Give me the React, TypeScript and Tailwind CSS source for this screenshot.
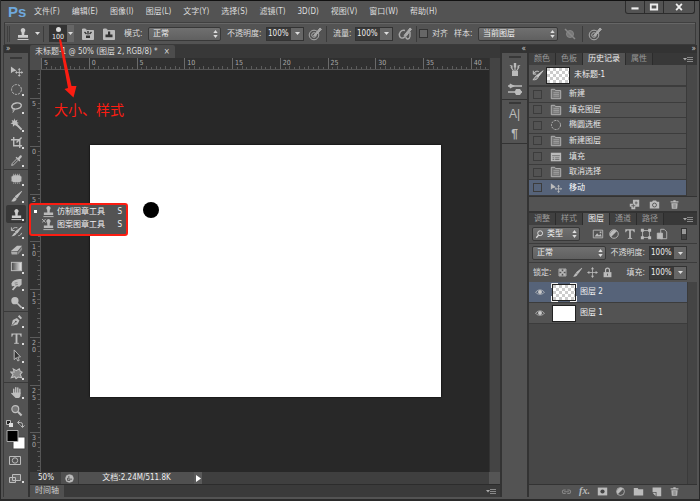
import React, { useLayoutEffect, useRef, useState } from "react";

type IconProps = { size?: number; className?: string; children: React.ReactNode };

const Svg = ({ size = 14, className = "", children }: IconProps) => (
  <svg
    width={size}
    height={size}
    viewBox="0 0 14 14"
    fill="none"
    stroke="currentColor"
    strokeWidth="1"
    className={`shrink-0 ${className}`}
    aria-hidden="true"
  >
    {children}
  </svg>
);

const moveIcon = (
  <>
    <path d="M1 1.500v7.500l2-1.800L7 6z" fill="currentColor" stroke="none" />
    <path d="M10 4.500v7M6.500 8h7" />
    <path d="M10 3.300l1.700 1.900H8.300zM10 12.700l1.700-1.900H8.300zM5.500 8l1.900-1.700v3.400zM14 8l-1.700-1.700v3.400z" fill="currentColor" stroke="none" />
  </>
);
const ellipseIcon = <circle cx="7" cy="7" r="5.300" strokeDasharray="2.600 1.100" />;
const stampIcon = (
  <>
    <path d="M7 1a2.400 2.400 0 0 1 1.500 4.200L8.200 8H12v2.800H2V8h3.800l-.3-2.800A2.400 2.400 0 0 1 7 1z" fill="currentColor" stroke="none" />
    <path d="M1.500 12.500h11" />
  </>
);
const brushIcon = (
  <>
    <path d="M12.500 1.500L7.500 8.500 5.500 7z" fill="currentColor" />
    <path d="M5.300 7.500l2 1.800C6.500 11.800 4 12.800 1 12.200c1.800-.5 2-3.700 4.300-4.700z" fill="currentColor" stroke="none" />
  </>
);
const docIcon = (
  <>
    <path d="M1.500 12.500v-11h4l1 1.500h6v9.500z" fill="#777" />
    <path d="M4 5.500h6.500M4 7.500h6.500M4 9.500h6.500" stroke="#a5a5a5" />
  </>
);
const fillIcon = (
  <>
    <path d="M1 2h12v10H1z" fill="currentColor" stroke="none" />
    <path d="M2.500 5.500h9M3 8h2M6 8h5M3 10h2M6 10h5" stroke="#666" />
  </>
);
const trashIcon = (
  <>
    <path d="M2 3h10v1.500H2zM5.500 1.500h3V3h-3zM3 5.500h8l-.6 7H3.600z" fill="currentColor" stroke="none" />
    <path d="M5.500 6.500v5M7 6.500v5M8.500 6.500v5" stroke="#666" strokeWidth=".6" />
  </>
);
const typeIcon = (
  <>
    <path d="M1.500 1.500h11V5h-1c-.2-1.500-.8-2.200-2.200-2.200H4.700C3.300 2.800 2.700 3.500 2.500 5h-1z" fill="currentColor" stroke="none" />
    <path d="M7 2v10" strokeWidth="2" />
    <path d="M4.500 12.200h5" />
  </>
);
const targetPen = (
  <>
    <circle cx="6" cy="8" r="4.800" />
    <circle cx="6" cy="8" r="2.300" />
    <path d="M5.500 8.800L12 1l1.500 1.300L7 9z" fill="currentColor" />
  </>
);
const circleHalf = (
  <>
    <circle cx="7" cy="7" r="5" />
    <path d="M3.500 10.500A5 5 0 0 1 10.500 3.500z" fill="currentColor" stroke="none" />
  </>
);

const toolGroups = [
  [
    { name: "移动", icon: moveIcon },
    { name: "椭圆选框", icon: ellipseIcon },
    {
      name: "套索",
      icon: (
        <>
          <path d="M3.500 8.500C.5 6.500 2 3 6.500 2.200 10.500 1.500 13 3.300 12 5.600 11 8 6.500 9.500 3.800 8.300" strokeWidth="1.500" />
          <path d="M3.800 8c1.500.5 1.500 2.200.2 2.600-1 .2-1.500-1.500 0-1.700M4 10.500L3 12.500" />
        </>
      ),
    },
    {
      name: "魔棒",
      icon: (
        <>
          <path d="M6 6l6.500 6.500" strokeWidth="2.200" />
          <path d="M4.800.3l.8 2.700 2.500-1-.8 2.400 2.300 1.100-2.600 1 .5 2.500-2.200-1.400L3.100 9.300l.1-2.700L.5 6l2.300-1.300-1.100-2.600 2.400.9z" fill="currentColor" stroke="none" />
        </>
      ),
    },
    { name: "裁剪", icon: <path d="M4 1v9.500h9M1 4h9.500v9M7 7l5.500-5.500" strokeWidth="1.500" /> },
    {
      name: "吸管",
      icon: (
        <>
          <path d="M7 5.500L2.500 10l-.7 2.300L4 11.500 8.500 7" />
          <path d="M6 4l1-1 1.500 1.300 2-2.300c1.500-1.400 3 .2 2 1.600L10.300 6l1 1-1.200 1.200z" fill="currentColor" stroke="none" />
        </>
      ),
    },
  ],
  [
    {
      name: "修补",
      icon: (
        <>
          <rect x="2" y="3.500" width="10" height="7.500" rx="2.500" fill="currentColor" stroke="none" />
          <path d="M4 2v10.500M6 2v10.500M8 2v10.500M10 2v10.500M1 5.500h12M1 7.500h12M1 9.500h12" strokeDasharray="1 .6" />
        </>
      ),
    },
    { name: "画笔", icon: brushIcon },
    { name: "仿制图章", icon: stampIcon },
    {
      name: "历史记录画笔",
      icon: (
        <>
          <path d="M12.500 2L7.500 9 5.500 7.500z" fill="currentColor" />
          <path d="M5.500 8L7 9.500c-1 2-3 2.700-5.500 2.500 1.500-.8 2-3 4-4z" fill="currentColor" stroke="none" />
          <path d="M2 5.500C3 3 5.500 2.300 8 3M1.500 2.500v3.500H5M9 11.500c1.800 0 3-1 3.500-3" />
        </>
      ),
    },
    {
      name: "橡皮擦",
      icon: (
        <>
          <path d="M1 8.500L7.500 3H13L8 9z" fill="currentColor" stroke="none" />
          <path d="M1 9.200l7 .4v2.900H1.800z" fill="#aaa" stroke="none" />
          <path d="M8.600 9.600L13 4v3.200l-4.400 5.300z" fill="#888" stroke="none" />
        </>
      ),
    },
    {
      name: "渐变",
      icon: (
        <>
          <defs>
            <linearGradient id="ramp">
              <stop offset="0" stopColor="#444" />
              <stop offset="1" stopColor="#eee" />
            </linearGradient>
          </defs>
          <rect x="1.500" y="2.500" width="11" height="9" fill="url(#ramp)" />
        </>
      ),
    },
    {
      name: "涂抹",
      icon: (
        <>
          <path d="M3 3.500C5 1.500 9 1 12.500 1v6L10 9.500 7.500 9l-4 4.500L2 12.500 5 8.500l-3 .5-.5-3z" fill="currentColor" stroke="none" />
          <path d="M5 5.500l3-.5M5.500 7.500l3-.7" stroke="#666" strokeWidth=".7" />
        </>
      ),
    },
    {
      name: "减淡",
      icon: (
        <>
          <circle cx="5.300" cy="5" r="3.900" fill="currentColor" stroke="none" />
          <path d="M7.800 7.800l4.700 4.700" strokeWidth="1.700" />
        </>
      ),
    },
  ],
  [
    {
      name: "钢笔",
      icon: (
        <>
          <path d="M1.500 13L3 6.500l4.500-2.300 2.700 2.700L8 11.300z" fill="currentColor" stroke="none" />
          <path d="M8.500 2.800L10 1.200l3 3-1.600 1.500z" fill="currentColor" stroke="none" />
          <path d="M2 12.500l4-4" stroke="#555" />
          <circle cx="6.300" cy="8.200" r="1" fill="#555" stroke="none" />
        </>
      ),
    },
    { name: "文字", icon: typeIcon },
    { name: "路径选择", icon: <path d="M4.500 1v10.500l2.300-2.200 1.600 3.600 1.500-.7-1.600-3.500 3-.2z" fill="#333" /> },
    {
      name: "自定形状",
      icon: <path d="M3.500 2l3.300 2L10 2l1 2.500 2 1-2 2.500 1.500 3.500-3.700-.7-2.300 1.700-1.300-2-3.700 1L3.200 8 1 5.500l3.500-.2z" fill="#888" strokeWidth="1.200" />,
    },
  ],
  [
    {
      name: "抓手",
      icon: (
        <>
          <path d="M4 8.500V3.500M6.200 7V1.700M8.400 7V2M10.600 8V3.500" strokeWidth="1.500" strokeLinecap="round" />
          <path d="M3.300 7h8v3.200c0 1-1.300 2.800-2 2.800H6L1.200 8.200c0-1.200 1.300-1.200 2.100-.3z" fill="currentColor" stroke="none" />
        </>
      ),
    },
    {
      name: "缩放",
      icon: (
        <>
          <circle cx="5.700" cy="5.500" r="3.700" fill="#777" strokeWidth="1.300" />
          <path d="M8.500 8.300l4 4" strokeWidth="2.200" />
        </>
      ),
    },
  ],
];

const menus = [
  "文件(F)", "编辑(E)", "图像(I)", "图层(L)", "文字(Y)", "选择(S)",
  "滤镜(T)", "3D(D)", "视图(V)", "窗口(W)", "帮助(H)",
];

const historyItems = [
  { label: "新建", icon: docIcon },
  { label: "填充图层", icon: docIcon },
  { label: "椭圆选框", icon: ellipseIcon },
  { label: "新建图层", icon: docIcon },
  { label: "填充", icon: fillIcon },
  { label: "取消选择", icon: docIcon },
  { label: "移动", icon: moveIcon },
];

const UpDown = () => (
  <svg width="5" height="8" viewBox="0 0 5 8" className="pointer-events-none absolute right-[3px] top-[3px]" fill="#ddd">
    <path d="M2.500 0L4.700 3H.3zM2.500 8L4.700 5H.3z" />
  </svg>
);

const Caret = () => (
  <svg width="5" height="3" viewBox="0 0 5 3" className="shrink-0" fill="#ddd">
    <path d="M0 0h5L2.500 3z" />
  </svg>
);

const Select = ({ id, value, className }: { id: string; value: string; className: string }) => (
  <div className={`relative h-[14px] ${className}`}>
    <select
      id={id}
      aria-label={value}
      className="h-full w-full appearance-none rounded-[2px] border border-[#383838] bg-gradient-to-b from-[#707070] to-[#606060] pl-1 leading-3 text-[#eee]"
    >
      <option>{value}</option>
    </select>
    <UpDown />
  </div>
);

const Percent = ({ id }: { id: string }) => (
  <div className="flex h-[14px] w-[38px] shrink-0 border border-[#333]">
    <input id={id} defaultValue="100%" className="w-6 bg-[#3a3a3a] pl-px text-[#eee] outline-none" />
    <button aria-label="展开" className="flex flex-1 items-center justify-center bg-[#666]">
      <Caret />
    </button>
  </div>
);

const Divider = () => <div className="h-4 w-px shrink-0 bg-[#3c3c3c]" />;

const Grip = () => <div className="mx-auto h-[2px] w-3 bg-[#383838]" />;

const Checker = ({ id }: { id: string }) => (
  <svg viewBox="0 0 22 15" className="block h-[17px] w-6 shrink-0 border border-[#222]">
    <defs>
      <pattern id={id} width="6" height="6" patternUnits="userSpaceOnUse">
        <path d="M0 0h6v6H0z" fill="#fff" />
        <path d="M0 0h3v3H0zM3 3h3v3H3z" fill="#ccc" />
      </pattern>
    </defs>
    <rect width="22" height="15" fill={`url(#${id})`} />
  </svg>
);

const PanelMenu = () => (
  <button aria-label="面板菜单" className="ml-auto mr-1 text-[#aaa]">
    <svg width="10" height="7" viewBox="0 0 10 7" fill="none" stroke="currentColor">
      <path d="M0 2h4L2 4.500z" fill="currentColor" stroke="none" />
      <path d="M4 1.500h6M4 3.500h6M4 5.500h6" stroke="#888" />
    </svg>
  </button>
);

const PanelTabs = ({ tabs, active }: { tabs: string[]; active: string }) => (
  <div className="flex h-3 shrink-0 bg-[#383838]">
    {tabs.map((tab) => (
      <button
        key={tab}
        className={
          tab === active
            ? "border-r border-[#2c2c2c] bg-[#535353] px-[5px] leading-3 text-[#eee]"
            : "border-r border-[#2c2c2c] bg-[#404040] px-[5px] leading-3 text-[#999]"
        }
      >
        {tab}
      </button>
    ))}
    <PanelMenu />
  </div>
);

// pixels per 5 ruler units at 50% zoom
const STEP = 47.75;

const useSize = () => {
  const ref = useRef<HTMLDivElement>(null);
  const [size, setSize] = useState({ width: 447, height: 402 });
  useLayoutEffect(() => {
    const measure = () => {
      const box = ref.current?.getBoundingClientRect();
      if (box && box.width && box.height) setSize({ width: box.width, height: box.height });
    };
    measure();
    window.addEventListener("resize", measure);
    return () => window.removeEventListener("resize", measure);
  }, []);
  return { ref, ...size };
};

const TopRuler = () => {
  const { ref, width } = useSize();
  return (
    <div ref={ref} className="h-3 min-w-0 flex-1 border-b border-[#555] bg-[#303030]">
      <svg className="h-full w-full" fontSize="7" fill="#aaa">
        {Array.from({ length: Math.ceil((width * 10) / STEP) }, (_, i) => (
          <path
            key={i}
            d={`M${Math.round((i * STEP) / 10) + 0.5} ${i % 10 === 0 ? 0 : i % 2 ? 9 : 8}V12`}
            stroke={i % 10 === 0 ? "#6a6a6a" : "#5c5c5c"}
          />
        ))}
        {Array.from({ length: Math.ceil(Math.max(0, width - 12) / STEP) }, (_, i) => (
          <text key={i} x={i * STEP + 3} y="7">
            {Math.abs(i * 5 - 5)}
          </text>
        ))}
      </svg>
    </div>
  );
};

const SideRuler = () => {
  const { ref, height } = useSize();
  return (
    <div ref={ref} className="w-[11px] shrink-0 border-r border-[#555] bg-[#303030]">
      <svg className="h-full w-full" fontSize="7" fill="#aaa">
        {Array.from({ length: Math.ceil((height * 10) / STEP) }, (_, i) => {
          const y = Math.round(28 + ((i - 5) * STEP) / 10) + 0.5;
          return <path key={i} d={`M${(i - 5) % 10 === 0 ? 0 : i % 2 ? 7 : 8} ${y}H11`} stroke="#5c5c5c" />;
        })}
        {Array.from({ length: Math.ceil(Math.max(0, height - 44) / STEP) }, (_, i) =>
          String(Math.abs(i * 5 - 5))
            .split("")
            .map((digit, n) => (
              <text key={`${i}-${n}`} x="2" y={28 + i * STEP + 8 + n * 7}>
                {digit}
              </text>
            ))
        )}
      </svg>
    </div>
  );
};

const MenuBar = () => (
  <header className="flex h-[22px] shrink-0 items-center border-t border-[#111] pl-[7px]">
    <span className="w-[26px] font-['Liberation_Sans',sans-serif] text-[15px] font-bold leading-5 text-[#6fa8dc]">Ps</span>
    <nav className="flex gap-3">
      {menus.map((menu) => (
        <button key={menu} className="whitespace-nowrap">
          {menu}
        </button>
      ))}
    </nav>
    <div className="mb-auto ml-auto mr-1 flex h-[13px] rounded-b-[3px] border border-t-0 border-[#2c2c2c] text-[#eee]">
      <button aria-label="最小化" className="flex w-[19px] items-center justify-center border-r border-[#2c2c2c]">
        <Svg size={10}><path d="M2 9h10" strokeWidth="3" /></Svg>
      </button>
      <button aria-label="最大化" className="flex w-[19px] items-center justify-center border-r border-[#2c2c2c]">
        <Svg size={10}><path d="M2.500 3.500h9v7h-9z" strokeWidth="2.500" /></Svg>
      </button>
      <button aria-label="关闭" className="flex w-[30px] items-center justify-center">
        <Svg size={10}><path d="M3 2.500l8 9M11 2.500l-8 9" strokeWidth="2.500" /></Svg>
      </button>
    </div>
  </header>
);

const OptionsBar = () => (
  <div className="mx-[3px] flex h-[23px] shrink-0 items-center border border-[#3a3a3a] border-t-[#404040] pl-[2px] shadow-[inset_0_1px_0_#666]">
    <div className="h-4 w-[3px] border-x border-[#404040]" />
    <button aria-label="仿制图章" className="ml-[6px] flex items-center gap-[5px] text-[#ccc]">
      <Svg>{stampIcon}</Svg>
      <Caret />
    </button>
    <div className="ml-[3px] mr-[5px]">
      <Divider />
    </div>
    <button className="flex h-[17px] w-[18px] flex-col items-center bg-[#333] text-[7px] leading-[8px] text-[#eee]">
      <span className="mt-[2px] h-[5px] w-[5px] shrink-0 rounded-full bg-[#ddd]" />
      <span className="mt-px">100</span>
    </button>
    <button aria-label="画笔预设" className="flex h-[17px] w-[7px] items-center justify-center bg-[#666]">
      <Caret />
    </button>
    <button aria-label="画笔面板" className="ml-[7px] text-[#bbb]">
      <Svg>
        <path d="M1.500 2h3l1 1.500h7v9h-11z" fill="currentColor" />
        <path d="M3.500 5l2 2M10.500 5l-2 2M7 4v3.500" stroke="#333" strokeWidth="1.400" />
        <path d="M5 8.500h4v2.500H5z" fill="#333" stroke="none" />
      </Svg>
    </button>
    <button aria-label="仿制源" className="ml-[7px] text-[#bbb]">
      <Svg>
        <path d="M1.500 2h3l1 1.500h7v9h-11z" fill="currentColor" />
        <path d="M6 4.500h2.200v3h2.300v2.700H3.500V7.500H6z" fill="#333" stroke="none" />
      </Svg>
    </button>
    <label htmlFor="mode" className="ml-[8px] w-6 shrink-0">模式:</label>
    <Select id="mode" value="正常" className="w-[73px]" />
    <label htmlFor="opacity" className="ml-[6px] w-[39px] shrink-0">不透明度:</label>
    <Percent id="opacity" />
    <button aria-label="不透明度压力" className="ml-1 mr-1 text-[#aaa]"><Svg>{targetPen}</Svg></button>
    <Divider />
    <label htmlFor="flow" className="ml-[6px] w-[22px] shrink-0">流量:</label>
    <Percent id="flow" />
    <button aria-label="喷枪" className="ml-[5px] mr-1 text-[#aaa]">
      <Svg>
        <path d="M6 8.500L12 1l1.500 1.200L8 9.500z" fill="currentColor" />
        <path d="M7 3.500C3 2.500.8 6 1.500 9c.6 2.500 3.500 3 5.500.5M8 10c0 3 3.500 2.500 4-.5V5" strokeWidth="1.400" />
      </Svg>
    </button>
    <Divider />
    <input id="aligned" type="checkbox" className="ml-[2px] h-[9px] w-[9px] shrink-0 appearance-none border border-[#333] bg-[#666]" />
    <label htmlFor="aligned" className="ml-1 shrink-0">对齐</label>
    <label htmlFor="sample" className="ml-[6px] w-6 shrink-0">样本:</label>
    <Select id="sample" value="当前图层" className="w-20" />
    <button aria-label="忽略调整图层" className="ml-[5px] mr-[5px] text-[#888]">
      <Svg>
        <circle cx="7" cy="7" r="3.500" fill="#777" />
        <path d="M2 2l10 10" strokeWidth="1.500" />
      </Svg>
    </button>
    <Divider />
    <button aria-label="大小压力" className="ml-[5px] text-[#aaa]"><Svg>{targetPen}</Svg></button>
  </div>
);

const Toolbar = () => (
  <aside className="flex w-[25px] shrink-0 flex-col border-l border-[#3a3a3a]">
    <div className="h-2 bg-[#333] pl-[2px] leading-[8px] text-[#ccc]">»</div>
    <div className="pb-1 pt-1"><Grip /></div>
    {toolGroups.map((group, g) => (
      <div
        key={g}
        className={
          g === 0
            ? "grid h-[107px] auto-rows-fr border-b border-[#3a3a3a]"
            : g === 1
              ? "grid h-[142px] auto-rows-fr border-b border-[#3a3a3a]"
              : g === 2
                ? "grid h-[71px] auto-rows-fr border-b border-[#3a3a3a]"
                : "grid h-9 auto-rows-fr"
        }
      >
        {group.map((tool) => (
          <button
            key={tool.name}
            aria-label={tool.name}
            className={
              tool.name === "仿制图章"
                ? "relative mx-[2px] flex items-center justify-center rounded-[2px] bg-[#383838] text-[#ccc]"
                : "relative mx-[2px] flex items-center justify-center text-[#bfbfbf]"
            }
          >
            <Svg size={13}>{tool.icon}</Svg>
            {tool.name !== "移动" && tool.name !== "缩放" && (
              <span className="absolute bottom-[2px] right-[2px] h-[2px] w-[2px] bg-[#ddd]" />
            )}
          </button>
        ))}
      </div>
    ))}
    <svg viewBox="0 0 24 68" className="w-6 text-[#bbb]" fill="none" stroke="currentColor">
      <path d="M2.500 1.500h4v4h-4z" fill="#222" />
      <path d="M5 4h4v4H5z" fill="#ddd" stroke="none" />
      <path d="M14 3.500h2.500q2 0 2 2V8M15.500 1.500l-2 2 2 2M16.500 6.500l2 2 2-2" />
      <path d="M9 18h12v12H9z" fill="#fff" stroke="#444" />
      <path d="M3 11.500h11v11H3z" fill="#000" stroke="#aaa" />
      <path d="M5.500 37.500h11v8h-11z" />
      <circle cx="11" cy="41.500" r="2.700" />
      <path d="M8.500 55.500h8v6h-8zM5.500 58.500h6v5h-6z" fill="#666" />
      <path d="M18 62h2v2h-2z" fill="#ddd" stroke="none" />
    </svg>
  </aside>
);

const Flyout = () => (
  <div className="absolute left-7 top-[203px] z-10 w-[99px] rounded-[3px] border-2 border-[#fb1d12] bg-[#535353] pb-[3px] text-[#eee]">
    <button className="flex h-[13px] w-full items-center">
      <span className="ml-[3px] mr-[5px] h-[3px] w-[3px] bg-white" />
      <Svg size={13} className="mr-[2px] text-[#bbb]">{stampIcon}</Svg>
      仿制图章工具
      <span className="ml-auto mr-1">S</span>
    </button>
    <button className="flex h-[13px] w-full items-center">
      <Svg size={13} className="ml-[11px] mr-[2px] text-[#bbb]">
        {stampIcon}
        <path d="M0 1l4 4M4 1L0 5" />
      </Svg>
      图案图章工具
      <span className="ml-auto mr-1">S</span>
    </button>
  </div>
);

const Workspace = () => (
  <main className="flex min-w-0 flex-1 flex-col border-x-2 border-[#333]">
    <div className="flex h-[13px] shrink-0 bg-[#383838]">
      <div className="flex items-center gap-[6px] rounded-t-[2px] bg-[#4c4c4c] px-[5px]">
        <span className="whitespace-nowrap">未标题-1 @ 50% (图层 2, RGB/8) *</span>
        <button aria-label="关闭文档">×</button>
      </div>
    </div>
    <div className="flex min-h-0 flex-1">
      <div className="flex min-w-0 flex-1 flex-col">
        <div className="flex h-3 shrink-0">
          <div className="w-[11px] bg-[#4c4c4c]" />
          <TopRuler />
        </div>
        <div className="flex min-h-0 flex-1 bg-[#282828]">
          <SideRuler />
          <div className="pl-[49px] pt-[75px]">
            <svg width="351" height="252" className="bg-white shadow-[0_0_2px_#000]">
              <circle cx="61" cy="65" r="8" fill="#000" />
            </svg>
          </div>
        </div>
      </div>
      <div className="w-[11px] border-l border-[#333] bg-[#444]" />
    </div>
    <footer className="flex h-3 shrink-0 items-center bg-[#3f3f3f] text-[#eee]">
      <span className="w-[31px] pl-2">50%</span>
      <span className="flex h-full w-[17px] items-center justify-center bg-[#505050]">
        <Svg size={9} className="text-[#bbb]">
          <circle cx="7" cy="7" r="6" fill="currentColor" />
          <path d="M6 3v5h5M4 6v4h4" stroke="#555" strokeWidth="1.500" />
        </Svg>
      </span>
      <span className="ml-px flex h-full w-[115px] items-center justify-center bg-[#505050]">文档:2.24M/511.8K</span>
      <button aria-label="状态菜单" className="flex h-full w-2 items-center justify-center bg-[#5a5a5a]">
        <svg width="5" height="7" viewBox="0 0 5 7" fill="#fff"><path d="M0 0v7l5-3.500z" /></svg>
      </button>
      <span className="ml-auto h-full w-[11px] bg-[#555]" />
    </footer>
    <div className="flex h-[13px] shrink-0 items-stretch border-t border-[#2c2c2c] bg-[#3a3a3a]">
      <button className="bg-[#505050] px-[5px] text-[#ccc]">时间轴</button>
      <PanelMenu />
    </div>
  </main>
);

const Strip = () => (
  <aside className="flex w-[25px] shrink-0 flex-col">
    <div className="h-2 bg-[#333] pr-px text-right leading-[8px] text-[#ccc]">«</div>
    <div className="flex h-[47px] flex-col items-center gap-[5px] border-b border-[#333] pt-[3px] text-[#bbb]">
      <Grip />
      <button aria-label="画笔">
        <Svg>
          <path d="M4 8h6v5H4z" fill="currentColor" stroke="none" />
          <path d="M5.500 8L3 4M7 8V3M8.500 8L11 4" strokeWidth="1.200" />
          <path d="M1.500 2l3 .5v3zM5.800 0h2.400v4.500H5.800zM12.500 2l-3 .5v3z" fill="currentColor" stroke="none" />
        </Svg>
      </button>
      <button aria-label="画笔预设">
        <Svg>
          <path d="M0 4h14M0 10h14" strokeWidth="1.500" />
          <path d="M2 1.500L7 4 2 6.500 1 4zM8 7h4l2 3-2 3H8l-1.500-3z" fill="currentColor" stroke="none" />
        </Svg>
      </button>
    </div>
    <div className="flex h-11 flex-col items-center border-b border-[#333] pt-[2px] text-[#bbb]">
      <Grip />
      <button aria-label="字符" className="mt-[2px] font-['Liberation_Sans',sans-serif] text-[12px] leading-4">A|</button>
      <button aria-label="段落" className="mt-1 font-['Liberation_Sans',sans-serif] text-[12px] font-bold leading-4">¶</button>
    </div>
  </aside>
);

const HistoryPanel = () => {
  const [current, setCurrent] = useState("移动");
  return (
    <section className="flex shrink-0 flex-col">
      <PanelTabs tabs={["颜色", "色板", "历史记录", "属性"]} active="历史记录" />
      <div className="flex border-b border-[#333]">
        <div className="min-w-0 flex-1">
          <div className="flex h-[22px] items-center border-b-2 border-[#3c3c3c] pl-[3px] text-[#eee]">
            <Svg size={12} className="mr-[2px] text-[#ccc]">
              <path d="M13 2L7 9.500 5 8z" fill="currentColor" />
              <path d="M5 8l2 2c-1 2-3 3-6 2.500 2-.8 2-3.500 4-4.500zM1.500 2v4H5M2 5c1.500-2.500 4-3 6-2" fill="#888" />
            </Svg>
            <Checker id="snapshot" />
            <span className="ml-1">未标题-1</span>
          </div>
          <ul className="grid h-[109px] auto-rows-fr">
            {historyItems.map((item) => (
              <li
                key={item.label}
                onClick={() => setCurrent(item.label)}
                className={
                  item.label === current
                    ? "flex items-center border-b border-[#3c3c3c] bg-[#566379] pl-1 text-white"
                    : "flex items-center border-b border-[#3c3c3c] pl-1 text-[#e4e4e4]"
                }
              >
                <input
                  type="checkbox"
                  aria-label={item.label}
                  className="h-[9px] w-[9px] appearance-none border border-[#3c3c3c]"
                />
                <Svg size={12} className="ml-2 mr-[7px] text-[#bbb]">{item.icon}</Svg>
                {item.label}
              </li>
            ))}
          </ul>
        </div>
        <div className="w-[11px] border-l border-[#3a3a3a] bg-[#484848]" />
      </div>
      <div className="flex h-[14px] items-center justify-end gap-[9px] pr-[17px] text-[#bbb]">
        <button aria-label="从当前状态创建新文档">
          <Svg size={11}>
            <path d="M5 1h8v9H8v3H3v-3H1V6h4z" fill="currentColor" stroke="none" />
            <path d="M5.500 6v5M3 8.500h5M9 3v4M7.500 5h3.500" stroke="#555" />
          </Svg>
        </button>
        <button aria-label="创建新快照">
          <Svg size={11}>
            <path d="M1 3.500h3L5 2h4l1 1.500h3V12H1z" fill="currentColor" stroke="none" />
            <circle cx="7" cy="7.700" r="2.500" stroke="#444" />
          </Svg>
        </button>
        <button aria-label="删除状态"><Svg size={11}>{trashIcon}</Svg></button>
      </div>
    </section>
  );
};

const Eye = () => (
  <Svg size={10} className="text-[#ccc]">
    <path d="M1 7.500c2.500-4.500 9.500-4.500 12 0-2.500 3.500-9.500 3.500-12 0z" />
    <circle cx="7" cy="7" r="2.200" fill="currentColor" />
  </Svg>
);

const LayersPanel = () => (
  <section className="flex min-h-0 flex-1 flex-col border-t-2 border-[#333]">
    <PanelTabs tabs={["调整", "样式", "图层", "通道", "路径"]} active="图层" />
    <div className="flex h-[19px] shrink-0 items-center border-b border-[#3c3c3c] pl-[3px] pr-[10px]">
      <div className="relative h-[14px] w-12">
        <select
          aria-label="滤镜类型"
          className="h-full w-full appearance-none rounded-[2px] border border-[#383838] bg-gradient-to-b from-[#707070] to-[#606060] pl-[14px] leading-3 text-[#eee]"
        >
          <option>类型</option>
        </select>
        <Svg size={9} className="pointer-events-none absolute left-[3px] top-[3px] text-[#ddd]">
          <circle cx="8" cy="5" r="3.800" strokeWidth="1.500" />
          <path d="M5.500 8L2 12" strokeWidth="2" />
        </Svg>
        <UpDown />
      </div>
      <div className="ml-3 flex gap-1 text-[#bbb]">
        <button aria-label="像素图层">
          <Svg size={12}>
            <path d="M1.500 2.500h11v9h-11z" />
            <path d="M3 10l3-4 2 2.500L10 7l1.500 3zM9 4h2v2H9z" fill="currentColor" stroke="none" />
          </Svg>
        </button>
        <button aria-label="调整图层"><Svg size={12}>{circleHalf}</Svg></button>
        <button aria-label="文字图层"><Svg size={12}>{typeIcon}</Svg></button>
        <button aria-label="形状图层">
          <Svg size={12}>
            <path d="M3 3h8v8H3z" />
            <path d="M1 1h3.500v3.500H1zM9.500 1H13v3.500H9.500zM1 9.500h3.500V13H1zM9.500 9.500H13V13H9.500z" fill="currentColor" stroke="none" />
          </Svg>
        </button>
        <button aria-label="智能对象">
          <Svg size={12}>
            <path d="M5.500 1.500h4l3 3v8h-7z" />
            <path d="M1.500 6h6v6.500h-6z" fill="currentColor" />
          </Svg>
        </button>
      </div>
      <button aria-label="图层过滤开关" className="ml-auto h-3 w-[6px] border border-[#333] bg-gradient-to-b from-[#999] from-50% to-[#444] to-50%" />
    </div>
    <div className="flex h-[19px] shrink-0 items-center border-b border-[#3c3c3c] pl-[3px] pr-[10px]">
      <Select id="blend" value="正常" className="w-[74px]" />
      <label htmlFor="layer-opacity" className="ml-auto mr-1">不透明度:</label>
      <Percent id="layer-opacity" />
    </div>
    <div className="flex h-[19px] shrink-0 items-center pl-1 pr-[10px]">
      <span>锁定:</span>
      <div className="ml-[6px] flex gap-1 text-[#bbb]">
        <button aria-label="锁定透明像素">
          <Svg size={11}>
            <path d="M2.500 2.500h9v9h-9z" />
            <path d="M3 3h3v3H3zM8 3h3v3H8zM5.500 5.500h3v3h-3zM3 8h3v3H3zM8 8h3v3H8z" fill="currentColor" stroke="none" />
          </Svg>
        </button>
        <button aria-label="锁定图像像素"><Svg size={11}>{brushIcon}</Svg></button>
        <button aria-label="锁定位置">
          <Svg size={11}>
            <path d="M7 2v10M2 7h10" />
            <path d="M7 0l2 3H5zM7 14l2-3H5zM0 7l3-2v4zM14 7l-3-2v4z" fill="currentColor" stroke="none" />
          </Svg>
        </button>
        <button aria-label="锁定全部">
          <Svg size={11}>
            <path d="M2 6.500h10V13H2z" fill="currentColor" stroke="none" />
            <path d="M4.500 7V4a2.500 2.500 0 0 1 5 0v3" strokeWidth="1.500" />
            <path d="M7 8.500v2.500" stroke="#444" />
          </Svg>
        </button>
      </div>
      <label htmlFor="fill" className="ml-auto mr-1">填充:</label>
      <Percent id="fill" />
    </div>
    <div className="flex min-h-0 flex-1 border-b border-[#333] bg-[#474747]">
      <ul className="flex-1 text-[#eee]">
        <li className="flex h-[21px] items-center border-b border-[#3c3c3c] bg-[#566379]">
          <button aria-label="切换图层 2" className="flex w-[21px] justify-center"><Eye /></button>
          <span className="relative ml-[2px]">
            <Checker id="layer2" />
            <svg width="26" height="19" viewBox="0 0 26 19" className="absolute -left-px -top-px max-w-none" fill="none" stroke="#eee">
              <path d="M.5 5V.5H7M19 .5h6.500V5M25.500 13v5.500H19M7 18.500H.5V13" />
            </svg>
          </span>
          <span className="ml-1">图层 2</span>
        </li>
        <li className="flex h-[21px] items-center border-b border-[#3c3c3c] bg-[#535353]">
          <button aria-label="切换图层 1" className="flex w-[21px] justify-center"><Eye /></button>
          <span className="ml-[2px] h-[17px] w-6 border border-[#222] bg-white" />
          <span className="ml-1">图层 1</span>
        </li>
      </ul>
      <div className="w-[10px] border-l border-[#3a3a3a] bg-[#444]" />
    </div>
    <div className="flex h-3 shrink-0 items-center justify-end gap-[7px] pr-[17px] text-[#bbb]">
      <button aria-label="链接图层" className="text-[#888]">
        <Svg size={11}><path d="M6 5H3.500a2.300 2.300 0 0 0 0 4.500H6M8 5h2.500a2.300 2.300 0 0 1 0 4.500H8M4 7.300h6" strokeWidth="1.300" /></Svg>
      </button>
      <button className="w-[11px] font-['Liberation_Serif',serif] text-[10px] font-bold italic leading-3">fx.</button>
      <button aria-label="添加蒙版">
        <Svg size={11}>
          <path d="M1 2h12v10H1z" fill="currentColor" stroke="none" />
          <circle cx="7" cy="7" r="2.700" fill="#444" stroke="none" />
        </Svg>
      </button>
      <button aria-label="新建调整图层"><Svg size={11}>{circleHalf}</Svg></button>
      <button aria-label="新建组"><Svg size={11}><path d="M1 2.500h5L7 4h6v8H1z" fill="currentColor" stroke="none" /></Svg></button>
      <button aria-label="新建图层">
        <Svg size={11}>
          <path d="M2 2h11v11H7V7.500H2z" fill="currentColor" stroke="none" />
          <path d="M2 8.500h4V13z" fill="currentColor" stroke="none" />
        </Svg>
      </button>
      <button aria-label="删除图层"><Svg size={11}>{trashIcon}</Svg></button>
    </div>
  </section>
);

const Note = () => (
  <>
    <svg width="20" height="60" viewBox="0 0 20 60" className="pointer-events-none absolute left-[57px] top-[38px] z-20" fill="#fb1d12">
      <path d="M1 1.500L3 1l10.500 47h5L15.500 59.500 6.500 51l3.500-1z" />
    </svg>
    <p className="absolute left-[53px] top-[100px] z-20 text-[14px] leading-5 text-[#fb1d12]">大小、样式</p>
  </>
);

export default function App() {
  return (
    <div
      lang="zh-CN"
      className="relative flex h-screen flex-col overflow-hidden border-x border-b-2 border-[#2a2a2a] bg-[#535353] font-['DejaVu_Sans_Condensed','Noto_Sans_CJK_SC',sans-serif] text-[8px] leading-[10px] text-[#ddd]"
    >
      <MenuBar />
      <OptionsBar />
      <div className="flex min-h-0 flex-1 px-[2px] pb-[2px]">
        <Toolbar />
        <Workspace />
        <Strip />
        <aside className="flex w-[170px] shrink-0 flex-col border-l-2 border-[#333]">
          <div className="h-2 shrink-0 bg-[#333] pr-px text-right leading-[8px] text-[#ccc]">»</div>
          <HistoryPanel />
          <LayersPanel />
        </aside>
      </div>
      <Flyout />
      <Note />
    </div>
  );
}
